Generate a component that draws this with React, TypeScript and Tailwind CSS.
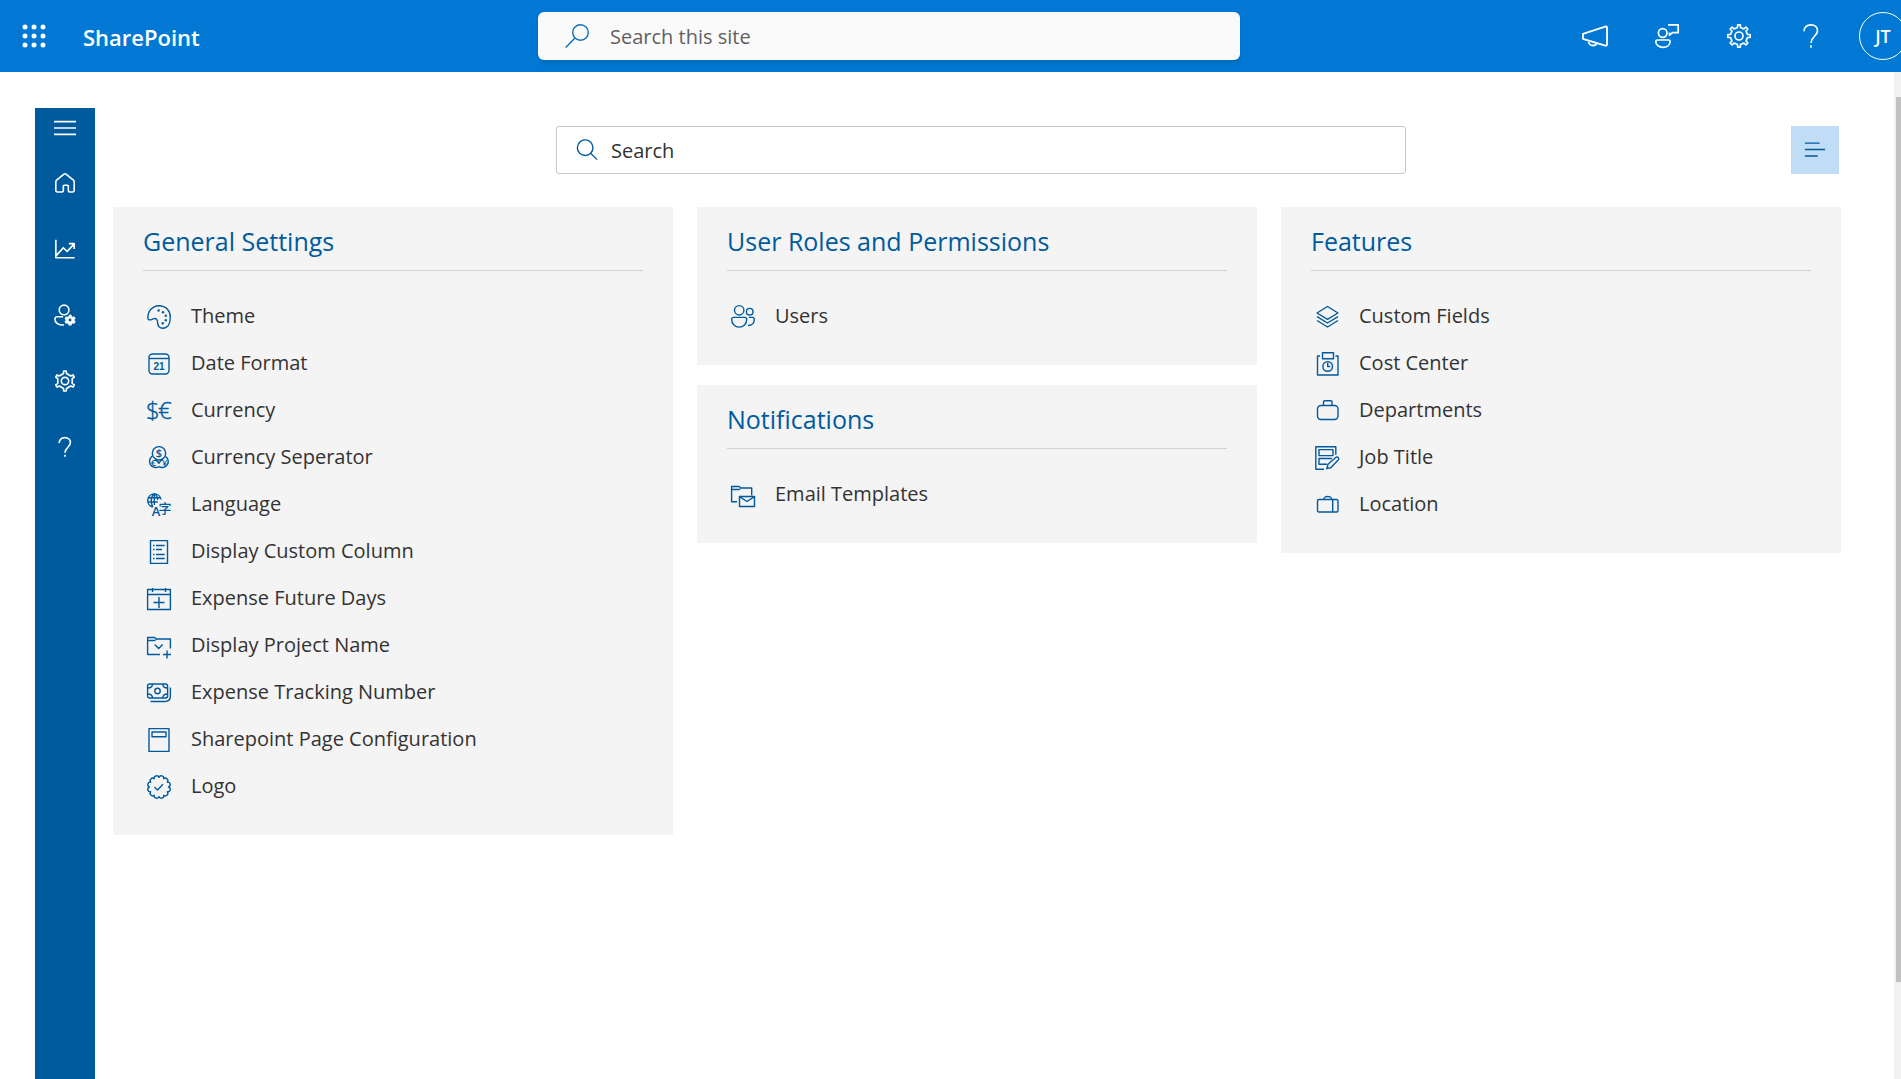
import type { ReactNode } from "react";

type IconProps = { children: ReactNode; className?: string };

function Icon({ children, className = "size-6" }: IconProps) {
  return (
    <svg
      viewBox="0 0 24 24"
      className={`shrink-0 overflow-visible ${className}`}
      fill="none"
      stroke="currentColor"
      strokeWidth="1.4"
      strokeLinejoin="round"
      aria-hidden="true"
    >
      {children}
    </svg>
  );
}

const polar = (angle: number, radius: number) =>
  `${(12 + radius * Math.cos(angle)).toFixed(2)} ${(12 + radius * Math.sin(angle)).toFixed(2)}`;

// Outline of a cog: each tooth is a trapezoid between two radii
function cogPath(teeth: number, outer: number, inner: number, tip: number, root: number) {
  const points: string[] = [];
  for (let i = 0; i < teeth; i++) {
    const a = (i * 2 * Math.PI) / teeth - Math.PI / 2;
    const step = Math.PI / teeth;
    points.push(polar(a - step * root, inner));
    points.push(polar(a - step * tip, outer));
    points.push(polar(a + step * tip, outer));
    points.push(polar(a + step * root, inner));
  }
  return `M${points.join("L")}Z`;
}

// Outline of the badge seal: small bumps around a circle
function sealPath(bumps: number) {
  let d = `M${polar(0, 9.6)}`;
  for (let i = 1; i <= bumps; i++) {
    const a = (i * 2 * Math.PI) / bumps;
    d += `A2.5 2.5 0 0 1 ${polar(a, 9.6)}`;
  }
  return `${d}Z`;
}

const icons = {
  theme: (
    <Icon>
      <path d="M.9 13.6C.4 6 5.8.7 12 .7c7 0 11.3 5 11.3 11.4 0 6.500-2.600 11.200-7.400 11.200-3.900 0-5.300-2.500-5.400-6.300C10.400 14.300 9.300 13.200 7 13.600c-1.800.3-2.200 1.300-3.800 1.300-1.300 0-2.200-.3-2.300-1.300z" />
      <g fill="currentColor" stroke="none">
        <circle cx="11.600" cy="5.500" r="1.200" />
        <circle cx="16" cy="7.200" r="1.200" />
        <circle cx="18.800" cy="10.700" r="1.200" />
        <circle cx="18.800" cy="15.200" r="1.200" />
        <circle cx="15.700" cy="18.200" r="1.200" />
      </g>
    </Icon>
  ),
  date: (
    <Icon>
      <rect x="2" y="2" width="20" height="20" rx="3.500" />
      <path d="M2 6.500h20" />
      <text
        x="12"
        y="18"
        textAnchor="middle"
        fontSize="10"
        fontWeight="700"
        fontFamily="Liberation Sans, sans-serif"
        fill="currentColor"
        stroke="none"
      >
        21
      </text>
    </Icon>
  ),
  currency: (
    <Icon>
      <g
        fontFamily="Open Sans, sans-serif"
        fontWeight="300"
        fontSize="24"
        fill="currentColor"
        strokeWidth="0.4"
      >
        <text x="-1" y="20">
          $
        </text>
        <text x="11" y="20">
          €
        </text>
      </g>
    </Icon>
  ),
  separator: (
    <Icon>
      <path d="M5.400 10.100a6.200 6.200 0 1 0 6.600 10.500M18.400 10.300a6 6 0 1 1-6.400 10.300M8 13.500c2 1 3.500 2.500 3.900 4.200M16 13.300c-2 1-3.700 2.500-4 4.400" />
      <circle cx="12" cy="7.300" r="6.700" />
      <g
        textAnchor="middle"
        fontFamily="Open Sans, sans-serif"
        fontWeight="600"
        fill="currentColor"
        stroke="none"
      >
        <text x="12" y="11.300" fontSize="11">
          $
        </text>
        <text x="6.300" y="20.300" fontSize="9">
          €
        </text>
        <text x="17.500" y="20.300" fontSize="9">
          ¥
        </text>
      </g>
    </Icon>
  ),
  language: (
    <Icon>
      <path d="M5.500 14A6.700 6.700 0 1 1 14 6.500M7.300.6C3.500 3 3.500 11 6 14M7.300.6c2 1.200 3.200 3.600 3.300 6.400M7.300.6V12M1.300 4.700h11.900M.8 9h10" />
      <g fill="currentColor" stroke="none" textAnchor="middle">
        <text x="9" y="23" fontSize="13" fontFamily="Open Sans, sans-serif" fontWeight="600">
          A
        </text>
        <text x="18" y="20" fontSize="13" fontFamily="Noto Sans CJK SC, sans-serif" fontWeight="500">
          字
        </text>
      </g>
    </Icon>
  ),
  column: (
    <Icon>
      <rect x="3.500" y=".6" width="17" height="22.800" />
      <path d="M6 5.500h1.500M9 5.500h8.700M6 9.500h1.500M9 9.500h6M6 14.500h1.500M9 14.500h8.700M6 18.500h1.500M9 18.500h8.700" />
    </Icon>
  ),
  future: (
    <Icon>
      <rect x=".6" y="2.500" width="22.800" height="20" />
      <path d="M.6 7.500h22.800M5.500 1v4M18.500 1v4M12 10v11M6.500 15.500h11" />
    </Icon>
  ),
  project: (
    <Icon>
      <path d="M13 20.500H.6V3.500h7l2 1.500h13.800v9.500M.6 6.500h7l2-1.500M7.700 10.500l4 4 4-4M20 16.500v8M16 20.500h8" />
    </Icon>
  ),
  tracking: (
    <Icon>
      <rect x=".6" y="3" width="20" height="14" rx="2" />
      <circle cx="10.500" cy="10" r="2.700" />
      <path d="M5.500 3c0 2.500-2 4-4.900 4M15.700 3c0 2.500 2 4 4.900 4M5.500 17c0-2.500-2-4-4.900-4M15.700 17c0-2.500 2-4 4.900-4M23.400 6.500V15c0 3.500-2 5.500-5.500 5.500H3.500" />
    </Icon>
  ),
  page: (
    <Icon>
      <rect x="2" y=".6" width="20" height="22.800" />
      <rect x="5" y="4" width="14" height="4.700" />
    </Icon>
  ),
  logo: (
    <Icon>
      <path d={sealPath(12)} />
      <path d="M7.500 12l3 3 5.500-5.800" />
    </Icon>
  ),
  users: (
    <Icon>
      <circle cx="8.200" cy="5.300" r="4.700" />
      <path d="M.7 14.500c0-1.200.8-2.100 2-2.100h11c1.200 0 2 .9 2 2.100 0 4.600-3.400 7.600-7.500 7.600S.7 19.100.7 14.500z" />
      <circle cx="18.700" cy="6.700" r="3.300" />
      <path d="M17.900 12.400h3.600c1.100 0 1.800.8 1.800 1.900 0 3.900-2.500 6.200-6.300 6.200" />
    </Icon>
  ),
  email: (
    <Icon>
      <path d="M6 18.700H.6V3.500h7.500l2 1.500h10.600v7.500M.6 6.500h7.500l2-1.500" />
      <rect x="8.500" y="13.500" width="15" height="10" />
      <path d="M8.500 13.700l7.500 4.800 7.500-4.800" />
    </Icon>
  ),
  fields: (
    <Icon>
      <path d="M12.500 1.500L23 8l-10.500 6.300L2 8zM2 11.700l10.500 6.300L23 11.700M2 15.500L12.500 22 23 15.500" />
    </Icon>
  ),
  cost: (
    <Icon>
      <rect x="7.500" y=".8" width="11" height="6" />
      <path d="M5 4H2.500v19H23V4h-2.500M12.700 11v3.500h2.500" />
      <circle cx="12.700" cy="14.500" r="4.800" />
    </Icon>
  ),
  departments: (
    <Icon>
      <rect x="2.500" y="6.500" width="20.500" height="14" rx="3.500" />
      <path d="M8.500 6.500V3c0-.8.500-1.300 1.300-1.300h6c.8 0 1.200.5 1.200 1.300v3.500" />
    </Icon>
  ),
  job: (
    <Icon>
      <path d="M9 23.300H.8V.8h20v8M4 3.600h14v6H4zM17 12.500H4v5.800h8" />
      <path d="M11.800 22.700l1.200-4.400 7.700-6.800c1.800-1.500 4 .7 2.500 2.500l-7.200 7.500z" />
    </Icon>
  ),
  location: (
    <Icon>
      <rect x="2.500" y="6.500" width="20.500" height="12.500" rx="1.500" />
      <path d="M8.500 6.500c1-2.600 1.700-3 4.200-3s3.200.4 4.200 3M17.700 6.500v12.500" />
    </Icon>
  ),
};

const general = [
  { icon: icons.theme, label: "Theme" },
  { icon: icons.date, label: "Date Format" },
  { icon: icons.currency, label: "Currency" },
  { icon: icons.separator, label: "Currency Seperator" },
  { icon: icons.language, label: "Language" },
  { icon: icons.column, label: "Display Custom Column" },
  { icon: icons.future, label: "Expense Future Days" },
  { icon: icons.project, label: "Display Project Name" },
  { icon: icons.tracking, label: "Expense Tracking Number" },
  { icon: icons.page, label: "Sharepoint Page Configuration" },
  { icon: icons.logo, label: "Logo" },
];

const features = [
  { icon: icons.fields, label: "Custom Fields" },
  { icon: icons.cost, label: "Cost Center" },
  { icon: icons.departments, label: "Departments" },
  { icon: icons.job, label: "Job Title" },
  { icon: icons.location, label: "Location" },
];

const questionMark = (
  <path d="M5 7.300C5 3.300 7.700.8 11.800.8s6.700 2.500 6.700 5.900c0 5.300-6.500 6-6.500 12.300M12 21.300v2.500" />
);

const headerButtons = [
  {
    label: "What's new",
    icon: (
      <Icon className="size-[26px]">
        <path
          strokeWidth="1.700"
          d="M.9 10L21.500 3.300c.9-.3 1.600.1 1.600 1v15.600c0 .9-.7 1.300-1.600 1L.9 14.700zM6 16.300c0 2.600 1.800 4.500 4.200 4.500 1.800 0 3.300-1 3.800-2.300"
        />
      </Icon>
    ),
  },
  {
    label: "Feedback",
    icon: (
      <Icon>
        <g strokeWidth="1.700">
          <circle cx="7.700" cy="9" r="4.300" />
          <path d="M2.200 16h11.500c.8 0 1.400.6 1.400 1.400 0 3.500-3 6-7.100 6s-7.200-2.500-7.200-6c0-.8.600-1.400 1.400-1.400zM13 .8h10.200v7.900H17.500l-3 2.500V8.500" />
        </g>
      </Icon>
    ),
  },
  {
    label: "Settings",
    icon: (
      <Icon>
        <path strokeWidth="1.700" d={cogPath(8, 11.300, 8.600, 0.3, 0.45)} />
        <circle cx="12" cy="12" r="4" strokeWidth="1.700" />
      </Icon>
    ),
  },
  {
    label: "Help",
    icon: (
      <Icon>
        <g strokeWidth="1.700">{questionMark}</g>
      </Icon>
    ),
  },
];

const sideLinks = [
  {
    label: "Home",
    icon: (
      <Icon className="size-5">
        <path
          strokeWidth="1.900"
          d="M1 10.500c0-.8.300-1.400.9-1.900L10.800 1.300c.8-.6 1.600-.6 2.400 0l8.900 7.300c.6.500.9 1.100.9 1.900V21c0 1-.7 1.800-1.800 1.800h-3.500c-1 0-1.700-.7-1.700-1.700v-5.500c0-.6-.4-1-1-1h-4c-.6 0-1 .4-1 1v5.500c0 1-.7 1.700-1.700 1.700H2.800C1.700 22.800 1 22 1 21z"
        />
      </Icon>
    ),
  },
  {
    label: "Reports",
    icon: (
      <Icon className="size-5">
        <path strokeWidth="2" d="M1 1v21.500h22.500M1.500 20l8.500-9.500 4.500 4.500 8-8.500M16.500 5.500h6.500V12" />
      </Icon>
    ),
  },
  {
    label: "User settings",
    icon: (
      <Icon className="size-[22px]">
        <g strokeWidth="1.700">
          <circle cx="11" cy="6.500" r="5.300" />
          <path d="M10 14H3.500C2 14 1 15 1 16.300 1 20.500 5 23 11 23" />
        </g>
        <g fill="currentColor" stroke="none">
          <path d="M17 11.500l2 .2.600 2.200 2.500-.3 1.500 2.200-1.400 1.700 1.400 1.800-1.500 2.200-2.500-.3-.6 2.300h-3l-.7-2.300-2.300.3-1.500-2.200 1.300-1.800-1.300-1.700 1.500-2.200 2.300.3z" />
          <circle cx="17.500" cy="17.500" r="1.600" className="fill-[#005a9e]" />
        </g>
      </Icon>
    ),
  },
  {
    label: "Settings",
    icon: (
      <Icon className="size-[22px]">
        <path strokeWidth="1.800" d={cogPath(6, 11, 8.300, 0.24, 0.38)} />
        <circle cx="12" cy="12" r="4" strokeWidth="1.800" />
      </Icon>
    ),
  },
  {
    label: "Help",
    icon: (
      <Icon className="size-5">
        <g strokeWidth="2">{questionMark}</g>
      </Icon>
    ),
  },
];

function SettingsCard({
  title,
  items,
}: {
  title: string;
  items: { icon: ReactNode; label: string }[];
}) {
  return (
    <section className="bg-[#f4f4f4] px-[30px] pt-[14px] pb-[25px]">
      <h2 className="border-b border-[#d2d2d2] pb-[9px] text-[25px] leading-10 text-[#005a9e]">
        {title}
      </h2>
      <ul className="mt-[22px]">
        {items.map((item) => (
          <li key={item.label}>
            <a href="#" className="flex h-[47px] items-center gap-5 pl-1 text-[#005a9e]">
              {item.icon}
              <span className="pb-0.5 text-xl text-[#333]">{item.label}</span>
            </a>
          </li>
        ))}
      </ul>
    </section>
  );
}

export default function App() {
  return (
    <div className="flex min-h-screen flex-col overflow-hidden bg-white font-['Open_Sans',sans-serif]">
      <header className="flex h-[72px] items-center bg-[#0078d4] text-white">
        <div className="flex w-[538px] shrink-0 items-center">
          <button type="button" aria-label="App launcher" className="flex w-[68px] justify-center">
            <Icon>
              <g fill="currentColor" stroke="none">
                {[3, 12, 21].map((cy) =>
                  [3, 12, 21].map((cx) => <circle key={`${cx}-${cy}`} cx={cx} cy={cy} r="2.500" />)
                )}
              </g>
            </Icon>
          </button>
          <a href="#" className="pt-0.5 pl-[15px] text-[22px] font-semibold">
            SharePoint
          </a>
        </div>

        <label className="flex h-12 max-w-[702px] flex-1 items-center gap-[21px] rounded-md bg-[#fafafa] pl-[27px] text-[#0f6cbd] shadow-md">
          <Icon>
            <circle cx="15.500" cy="8.500" r="7.800" />
            <path d="M10 14L.7 23.500" />
          </Icon>
          <input
            type="search"
            aria-label="Search this site"
            placeholder="Search this site"
            className="w-full bg-transparent pt-0.5 text-xl text-[#616161] outline-none placeholder:text-[#616161]"
          />
        </label>

        <div className="-mr-[18px] ml-auto flex">
          {headerButtons.map((button) => (
            <button
              key={button.label}
              type="button"
              aria-label={button.label}
              className="flex h-[72px] w-[72px] items-center justify-center"
            >
              {button.icon}
            </button>
          ))}
          <button
            type="button"
            aria-label="Account"
            className="flex h-[72px] w-[72px] items-center justify-center"
          >
            <span className="flex size-12 items-center justify-center rounded-full border border-white text-lg font-semibold">
              JT
            </span>
          </button>
        </div>
      </header>

      <div className="flex flex-1">
        <div className="flex flex-1 gap-[18px] pt-9 pr-[53px] pl-[35px]">
          <nav className="flex w-[60px] shrink-0 flex-col bg-[#005a9e] text-white">
            <button type="button" aria-label="Menu" className="mb-0.5 flex h-10 items-center justify-center">
              <Icon className="size-[22px]">
                <path strokeWidth="1.800" d="M0 5h24M0 12h24M0 19h24" />
              </Icon>
            </button>
            {sideLinks.map((link) => (
              <a
                key={link.label}
                href="#"
                aria-label={link.label}
                className="flex h-[66px] items-center justify-center"
              >
                {link.icon}
              </a>
            ))}
          </nav>

          <main className="flex-1 pt-[18px]">
            <div className="grid grid-cols-[1fr_850px_1fr] pr-0.5 pl-2.5">
              <label className="col-start-2 flex h-12 items-center gap-[13px] rounded-[3px] border border-[#c8c8c8] pl-[19px] text-[#005a9e]">
                <Icon className="size-[22px]">
                  <circle cx="10" cy="9.500" r="8.500" strokeWidth="1.500" />
                  <path strokeWidth="1.500" d="M16 15.500l7 7" />
                </Icon>
                <input
                  type="search"
                  aria-label="Search settings"
                  placeholder="Search"
                  className="w-full pt-0.5 text-xl text-[#333] outline-none placeholder:text-[#333]"
                />
              </label>
              <button
                type="button"
                aria-label="Change layout"
                className="flex size-12 items-center justify-center justify-self-end bg-[#c0ddf5] text-[#005a9e]"
              >
                <Icon className="size-[22px]">
                  <path strokeWidth="1.500" d="M1 4.500h16M1 11.500h22M1 18.500h14" />
                </Icon>
              </button>
            </div>

            <div className="mt-[33px] grid grid-cols-3 items-start gap-6">
              <SettingsCard title="General Settings" items={general} />
              <div className="space-y-5">
                <SettingsCard
                  title="User Roles and Permissions"
                  items={[{ icon: icons.users, label: "Users" }]}
                />
                <SettingsCard
                  title="Notifications"
                  items={[{ icon: icons.email, label: "Email Templates" }]}
                />
              </div>
              <SettingsCard title="Features" items={features} />
            </div>
          </main>
        </div>

        {/* Scroll track */}
        <div className="w-[7px] bg-[#f1f1f1] pt-[25px] pl-0.5">
          <div className="h-[82vh] bg-[#c1c1c1]" />
        </div>
      </div>
    </div>
  );
}
